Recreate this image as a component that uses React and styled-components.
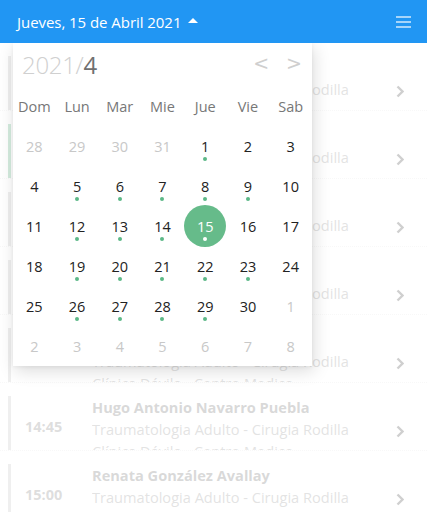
import React from "react";
import styled, { createGlobalStyle } from "styled-components";

const Global = createGlobalStyle`
  html, body { margin: 0; padding: 0; background: #fff; }
  body { font-family: "Open Sans", "Noto Sans", sans-serif; overflow: hidden; }
  * { box-sizing: border-box; }
`;

const Page = styled.div`
  width: 427px;
  height: 512px;
  overflow: hidden;
  display: flex;
  flex-direction: column;
`;

const Header = styled.header`
  height: 43px;
  flex: none;
  background: #2196f3;
  display: flex;
  align-items: center;
  justify-content: space-between;
  padding: 0 16px 0 17px;
`;

const Title = styled.div`
  color: #fff;
  font-size: 15px;
  display: flex;
  align-items: center;
  gap: 7px;
  letter-spacing: -0.05px;
`;

const Caret = styled.span`
  width: 0;
  height: 0;
  border-left: 5px solid transparent;
  border-right: 5px solid transparent;
  border-bottom: 5px solid #fff;
  margin-top: -2px;
`;

const Burger = styled.div`
  display: flex;
  flex-direction: column;
  gap: 3px;
  & > span {
    width: 15px;
    height: 2px;
    background: rgba(255, 255, 255, 0.6);
  }
`;

const Body = styled.div`
  position: relative;
  flex: 1;
  overflow: hidden;
`;

const List = styled.div`
  display: flex;
  flex-direction: column;
`;

const Row = styled.div`
  height: 68px;
  flex: none;
  padding-top: 13px;
  border-bottom: 1px dotted #e4e4e4;
  display: flex;
  align-items: flex-start;
  padding-left: 8px;
  padding-right: 23px;
`;

const RowInner = styled.div`
  flex: 1;
  height: 54px;
  border-left: 3px solid ${(p) => (p.$active ? "#66bb8a" : "#c4c4c4")};
  display: flex;
  align-items: center;
  overflow: hidden;
`;

const Time = styled.div`
  width: 81px;
  flex: none;
  padding-left: 14px;
  font-weight: 700;
  font-size: 14.5px;
  color: #8a8a8a;
  margin-top: 6px;
`;

const Info = styled.div`
  flex: 1;
  align-self: flex-start;
  display: flex;
  flex-direction: column;
  line-height: 22px;
  white-space: nowrap;
  overflow: hidden;
`;

const Name = styled.div`
  font-weight: 700;
  font-size: 14.6px;
  color: #777;
`;

const Spec = styled.div`
  font-size: 14.6px;
  color: #9a9a9a;
`;

const Chevron = styled.svg`
  flex: none;
  margin-top: 29px;
`;

const Overlay = styled.div`
  position: absolute;
  inset: 0;
  background: rgba(255, 255, 255, 0.72);
`;

const Popup = styled.div`
  position: absolute;
  top: 0;
  left: 13px;
  width: 299px;
  background: #fff;
  box-shadow: 2px 5px 16px rgba(0, 0, 0, 0.14), 0 1px 4px rgba(0, 0, 0, 0.06);
`;

const PopHead = styled.div`
  height: 43px;
  display: flex;
  align-items: center;
  justify-content: space-between;
  padding: 0 10px 0 9px;
`;

const YearMonth = styled.div`
  font-size: 24px;
  color: #d0d0d0;
  letter-spacing: -0.3px;
  font-weight: 300;
  & > b {
    font-weight: 400;
    color: #707070;
  }
`;

const Nav = styled.div`
  display: flex;
  gap: 17px;
  font-size: 19px;
  color: #cfcfcf;
  font-family: "DejaVu Sans", sans-serif;
  margin-top: -4px;
`;

const Grid = styled.div`
  display: grid;
  grid-template-columns: repeat(7, 1fr);
`;

const WeekDay = styled.div`
  height: 40px;
  display: flex;
  align-items: center;
  justify-content: center;
  font-size: 14.5px;
  color: #777;
`;

const Day = styled.div`
  height: 40px;
  position: relative;
  display: flex;
  align-items: center;
  justify-content: center;
  font-size: 14.5px;
  color: ${(p) => (p.$out ? "#c8c8c8" : p.$sel ? "#fff" : "#222")};
  &::before {
    content: "";
    display: ${(p) => (p.$sel ? "block" : "none")};
    position: absolute;
    width: 42px;
    height: 42px;
    border-radius: 50%;
    background: #66bb8a;
    left: 50%;
    top: 50%;
    transform: translate(-50%, -50%);
  }
  & > span {
    position: relative;
  }
`;

const Dot = styled.i`
  position: absolute;
  width: 4px;
  height: 4px;
  border-radius: 50%;
  background: ${(p) => (p.$sel ? "#fff" : "#5cb887")};
  left: 50%;
  top: 31px;
  transform: translateX(-50%);
`;

const rows = [
  { time: "13:30", name: "Carlos Muñoz Rojas", active: false },
  { time: "13:45", name: "María José Fernández Guerra", active: true },
  { time: "14:00", name: "Pedro Soto Vera", active: false },
  { time: "14:15", name: "Ana Pérez Lagos", active: false },
  { time: "14:30", name: "Luis Herrera Díaz", active: false },
  { time: "14:45", name: "Hugo Antonio Navarro Puebla", active: false },
  { time: "15:00", name: "Renata González Avallay", active: false },
];

const weekdays = ["Dom", "Lun", "Mar", "Mie", "Jue", "Vie", "Sab"];

const dotted = new Set([1, 5, 6, 7, 8, 9, 12, 13, 14, 15, 19, 20, 21, 22, 23, 26, 27, 28, 29]);

const days = [
  ...[28, 29, 30, 31].map((d) => ({ d, out: true })),
  ...Array.from({ length: 30 }, (_, i) => ({ d: i + 1, out: false })),
  ...[1, 2, 3, 4, 5, 6, 7, 8].map((d) => ({ d, out: true })),
];

export default function App() {
  return (
    <Page>
      <Global />
      <Header>
        <Title>
          Jueves, 15 de Abril 2021 <Caret />
        </Title>
        <Burger>
          <span />
          <span />
          <span />
        </Burger>
      </Header>
      <Body>
        <List>
          {rows.map((r) => (
            <Row key={r.time}>
              <RowInner $active={r.active}>
                <Time>{r.time}</Time>
                <Info>
                  <Name>{r.name}</Name>
                  <Spec>Traumatologia Adulto - Cirugia Rodilla</Spec>
                  <Spec>Clínica Dávila - Centro Medico</Spec>
                </Info>
              </RowInner>
              <Chevron width="8" height="13" viewBox="0 0 8 13">
                <polyline points="1.5,1.5 6.5,6.5 1.5,11.5" fill="none" stroke="#555" strokeWidth="2.4" />
              </Chevron>
            </Row>
          ))}
        </List>
        <Overlay />
        <Popup>
          <PopHead>
            <YearMonth>
              2021/<b>4</b>
            </YearMonth>
            <Nav>
              <span>&lt;</span>
              <span>&gt;</span>
            </Nav>
          </PopHead>
          <Grid>
            {weekdays.map((w) => (
              <WeekDay key={w}>{w}</WeekDay>
            ))}
            {days.map((x, i) => {
              const sel = !x.out && x.d === 15;
              return (
                <Day key={i} $out={x.out} $sel={sel}>
                  <span>{x.d}</span>
                  {!x.out && dotted.has(x.d) && <Dot $sel={sel} />}
                </Day>
              );
            })}
          </Grid>
        </Popup>
      </Body>
    </Page>
  );
}
